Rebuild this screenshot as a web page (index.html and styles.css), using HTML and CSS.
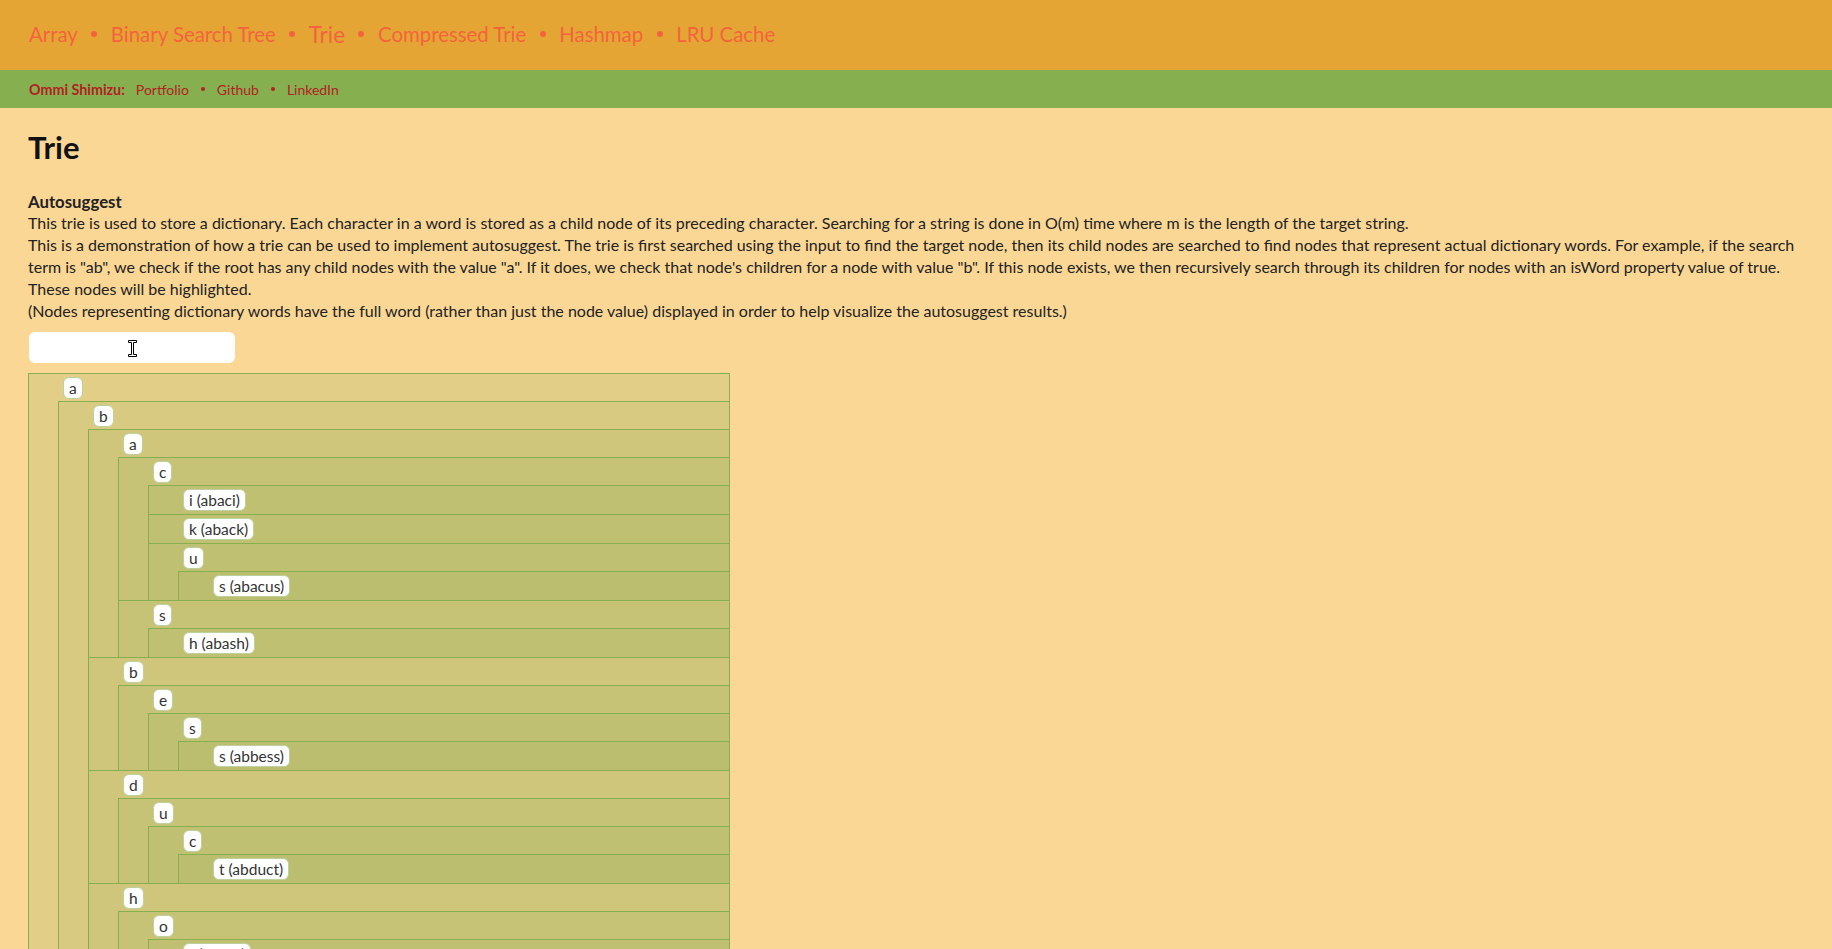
FILE: index.html
```html
<!DOCTYPE html>
<html lang="en">
<head>
<meta charset="utf-8">
<title>Trie</title>
<link rel="stylesheet" href="styles.css">
</head>
<body>
<nav class="topnav">
  <ul>
    <li><a href="#">Array</a></li>
    <li><a href="#">Binary Search Tree</a></li>
    <li><a href="#" class="active">Trie</a></li>
    <li><a href="#">Compressed Trie</a></li>
    <li><a href="#">Hashmap</a></li>
    <li><a href="#">LRU Cache</a></li>
  </ul>
</nav>
<div class="subnav">
  <strong class="author">Ommi Shimizu:</strong>
  <ul>
    <li><a href="#">Portfolio</a></li>
    <li><a href="#">Github</a></li>
    <li><a href="#">LinkedIn</a></li>
  </ul>
</div>
<main class="content">
  <h1>Trie</h1>
  <div class="desc">
    <div class="title">Autosuggest</div>
    <div>This trie is used to store a dictionary. Each character in a word is stored as a child node of its preceding character. Searching for a string is done in O(m) time where m is the length of the target string.</div>
    <div>This is a demonstration of how a trie can be used to implement autosuggest. The trie is first searched using the input to find the target node, then its child nodes are searched to find nodes that represent actual dictionary words. For example, if the search term is "ab", we check if the root has any child nodes with the value "a". If it does, we check that node's children for a node with value "b". If this node exists, we then recursively search through its children for nodes with an isWord property value of true. These nodes will be highlighted.</div>
    <div>(Nodes representing dictionary words have the full word (rather than just the node value) displayed in order to help visualize the autosuggest results.)</div>
  </div>
  <div class="search-wrap">
    <input class="search" type="text" aria-label="Search">
    <svg class="cursor" width="11" height="19" viewBox="0 0 11 19"><path d="M1.5 1.5H9.5V3.5H6.5V15.5H9.5V17.5H1.5V15.5H4.5V3.5H1.5Z" fill="#fff" stroke="#000" stroke-width="1"/></svg>
  </div>
  <div class="trie">
    <div class="node">
      <div class="row"><span class="label">a</span></div>
      <div class="children">
        <div class="node">
          <div class="row"><span class="label">b</span></div>
          <div class="children">
            <div class="node">
              <div class="row"><span class="label">a</span></div>
              <div class="children">
                <div class="node">
                  <div class="row"><span class="label">c</span></div>
                  <div class="children">
                    <div class="node"><div class="row word"><span class="label">i (abaci)</span></div></div>
                    <div class="node"><div class="row word"><span class="label">k (aback)</span></div></div>
                    <div class="node">
                      <div class="row"><span class="label">u</span></div>
                      <div class="children">
                        <div class="node"><div class="row word"><span class="label">s (abacus)</span></div></div>
                      </div>
                    </div>
                  </div>
                </div>
                <div class="node">
                  <div class="row"><span class="label">s</span></div>
                  <div class="children">
                    <div class="node"><div class="row word"><span class="label">h (abash)</span></div></div>
                  </div>
                </div>
              </div>
            </div>
            <div class="node">
              <div class="row"><span class="label">b</span></div>
              <div class="children">
                <div class="node">
                  <div class="row"><span class="label">e</span></div>
                  <div class="children">
                    <div class="node">
                      <div class="row"><span class="label">s</span></div>
                      <div class="children">
                        <div class="node"><div class="row word"><span class="label">s (abbess)</span></div></div>
                      </div>
                    </div>
                  </div>
                </div>
              </div>
            </div>
            <div class="node">
              <div class="row"><span class="label">d</span></div>
              <div class="children">
                <div class="node">
                  <div class="row"><span class="label">u</span></div>
                  <div class="children">
                    <div class="node">
                      <div class="row"><span class="label">c</span></div>
                      <div class="children">
                        <div class="node"><div class="row word"><span class="label">t (abduct)</span></div></div>
                      </div>
                    </div>
                  </div>
                </div>
              </div>
            </div>
            <div class="node">
              <div class="row"><span class="label">h</span></div>
              <div class="children">
                <div class="node">
                  <div class="row"><span class="label">o</span></div>
                  <div class="children">
                    <div class="node"><div class="row word"><span class="label">r (abhor)</span></div></div>
                  </div>
                </div>
              </div>
            </div>
            <div class="node">
              <div class="row"><span class="label">i</span></div>
              <div class="children">
                <div class="node">
                  <div class="row"><span class="label">d</span></div>
                  <div class="children">
                    <div class="node"><div class="row word"><span class="label">e (abide)</span></div></div>
                  </div>
                </div>
              </div>
            </div>
          </div>
        </div>
      </div>
    </div>
  </div>
</main>
</body>
</html>
```

FILE: styles.css
```css
* { box-sizing: border-box; }

body {
  margin: 0;
  background: #fbd795;
  font-family: Lato, "Open Sans", sans-serif;
  color: #222;
}

.topnav {
  height: 70px;
  background: #e5a535;
  display: flex;
  align-items: center;
  padding: 0 0 2px 29px;
}

.topnav ul,
.subnav ul {
  list-style: none;
  margin: 0;
  padding: 0;
  display: flex;
  align-items: center;
}

.topnav li,
.subnav li {
  display: flex;
  align-items: center;
}

.topnav li + li::before {
  content: "";
  width: 6px;
  height: 6px;
  border-radius: 50%;
  background: #f4643c;
  margin: 0 13.5px;
}

.topnav a {
  color: #f4643c;
  text-decoration: none;
  font-size: 20.4px;
  line-height: 27px;
}

.topnav a.active {
  font-size: 22.4px;
}

.subnav {
  height: 38px;
  background: #86b050;
  display: flex;
  align-items: center;
  padding-left: 29px;
  font-size: 14px;
  color: #b22222;
}

.subnav .author {
  font-size: 14.3px;
  margin-right: 11px;
}

.subnav a {
  color: #b22222;
  text-decoration: none;
}

.subnav li + li::before {
  content: "";
  width: 4px;
  height: 4px;
  border-radius: 50%;
  background: #b22222;
  margin: 0 12px;
}

.content {
  padding: 18px 28px 40px;
}

h1 {
  margin: 0 0 21px;
  font-size: 31px;
  line-height: 43.6px;
  font-weight: 700;
  color: #111;
}

.desc {
  font-size: 16px;
  line-height: 21.8px;
}

.desc .title {
  font-weight: 700;
  font-size: 16.8px;
}

.search-wrap {
  position: relative;
  width: 206px;
  height: 31px;
  margin: 11px 0 10px 1px;
}

.search {
  display: block;
  width: 206px;
  height: 31px;
  border: none;
  border-radius: 6px;
  background: #fff;
  padding: 0 8px;
  font: inherit;
  outline: none;
}

.cursor {
  position: absolute;
  left: 98px;
  top: 7px;
}

.trie {
  width: 702px;
  border-right: 1px solid #86b050;
  background: rgba(134, 176, 80, 0.11);
}

.node {
  border-top: 1px solid #86b050;
  border-left: 1px solid #86b050;
  background: rgba(134, 176, 80, 0.11);
}

.children {
  margin-left: 29px;
}

.row {
  display: flex;
  align-items: flex-start;
  padding: 3px 0 2px 34px;
}

.row.word {
  padding-bottom: 3px;
}

.label {
  height: 22px;
  line-height: 20px;
  padding: 0 5px;
  border: 1px solid #bdd19c;
  border-radius: 6px;
  background: #fff;
  font-size: 15.5px;
  color: #333;
  white-space: nowrap;
}
```
